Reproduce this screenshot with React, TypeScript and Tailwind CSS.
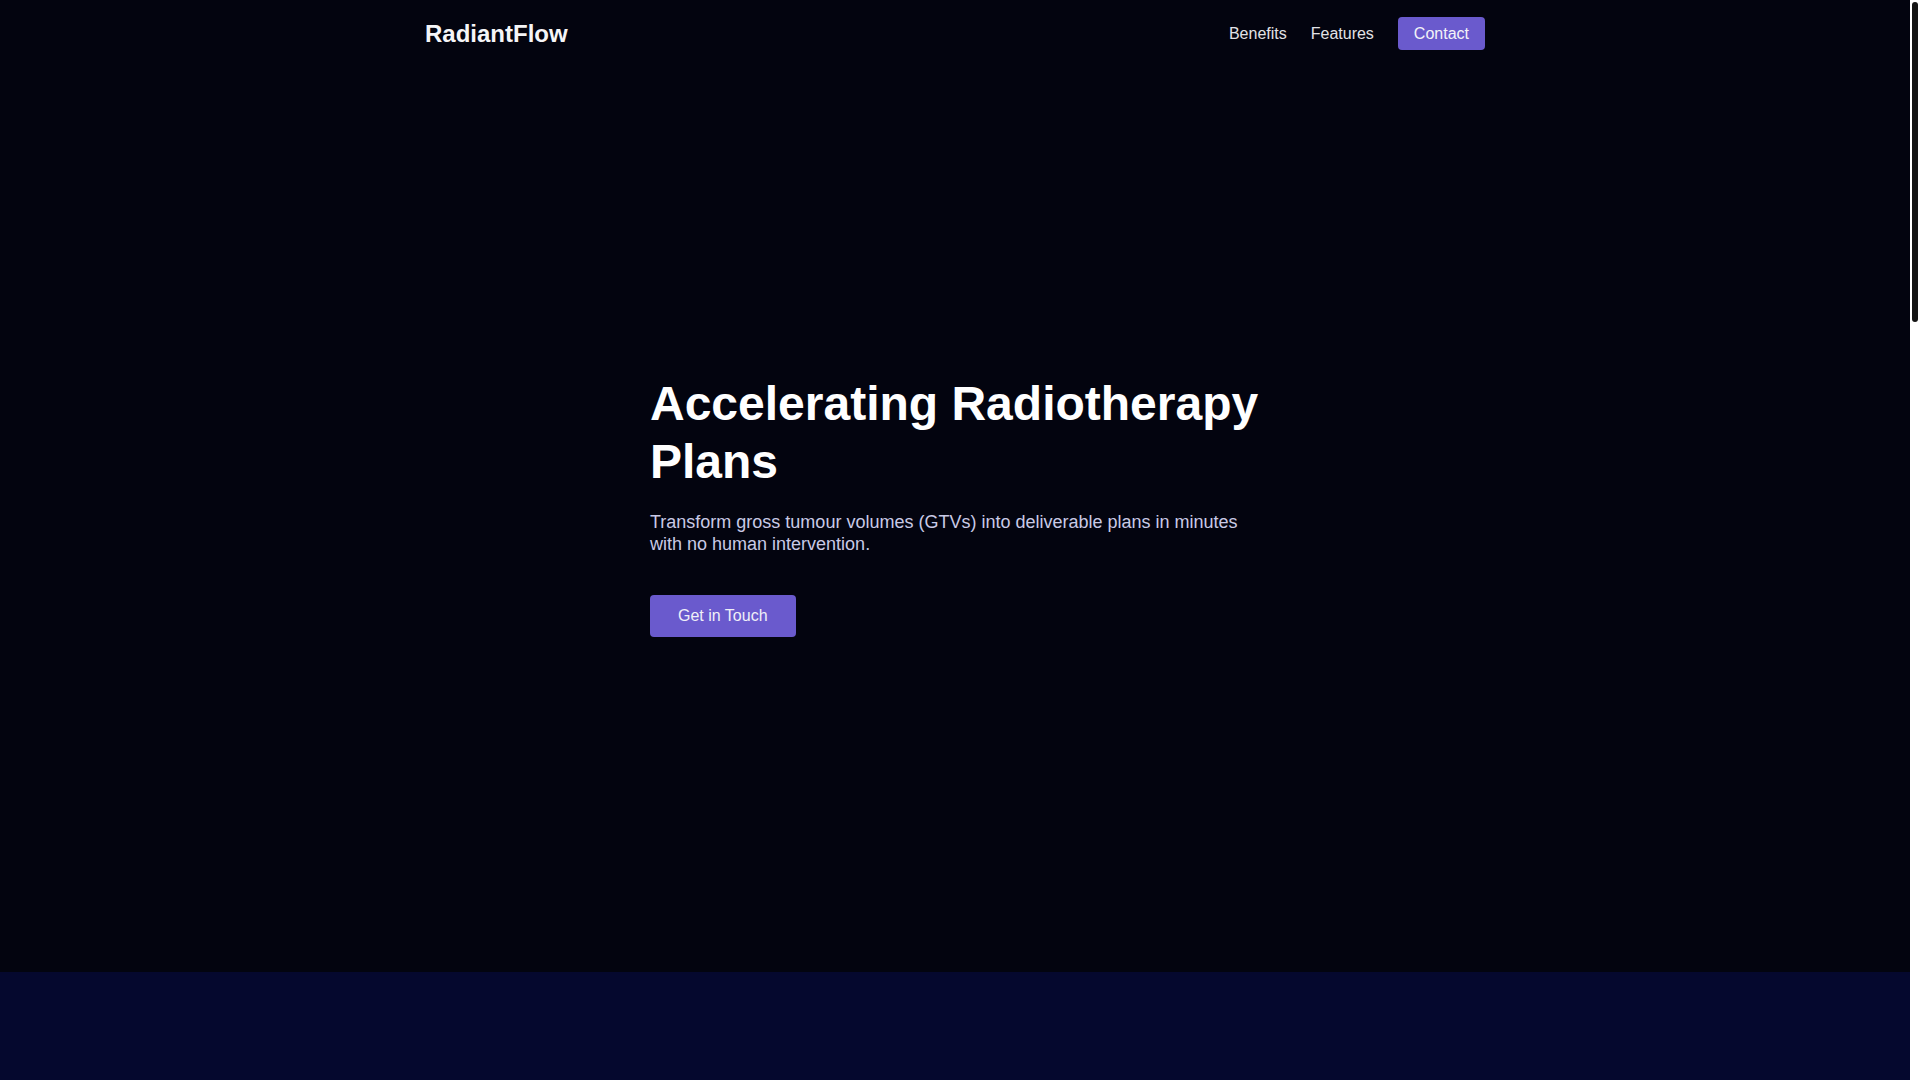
import React from "react";

export default function App() {
  return (
    <div
      className="flex h-screen w-full overflow-hidden bg-white text-white"
      style={{ fontFamily: '"Liberation Sans", Arial, sans-serif' }}
    >
      <main className="h-full min-w-0 flex-1 overflow-y-auto bg-[#04050f] [scrollbar-width:none] [&::-webkit-scrollbar]:hidden">
        <section className="h-[972px] bg-[#03040f]">
          <header className="mx-auto flex h-[67px] max-w-[1100px] items-center justify-between px-5">
            <div className="text-[24px] font-bold leading-[28px] text-[#f5f5f7]">RadiantFlow</div>
            <nav className="flex items-center gap-6 text-[16px] leading-[19px] text-[#e2e2e6]">
              <a href="#benefits">Benefits</a>
              <a href="#features">Features</a>
              <a href="#contact" className="rounded-[4px] bg-[#6a5acd] px-4 py-[7px] text-[#f3f3f8]">
                Contact
              </a>
            </nav>
          </header>
          <div className="mx-auto w-[610px] pt-[308px]">
            <h1 className="text-[48px] font-bold leading-[1.2] text-white">Accelerating Radiotherapy Plans</h1>
            <p className="mt-[21px] text-[18px] leading-[22px] text-[#c9cae6]">
              Transform gross tumour volumes (GTVs) into deliverable plans in minutes with no human intervention.
            </p>
            <button className="mt-[40px] rounded-[4px] bg-[#6a5acd] px-[28px] py-[12px] text-[16px] leading-[18px] text-[#f0f0f8]">
              Get in Touch
            </button>
          </div>
        </section>
        <section id="benefits" className="h-[1000px] bg-[#05082e]" />
        <section id="features" className="h-[1000px] bg-[#03040f]" />
        <section id="contact" className="h-[673px] bg-[#05082e]" />
      </main>
      <div aria-hidden="true" className="h-full w-[10px] shrink-0 bg-white pt-[2px]">
        <div className="mx-auto h-[320px] w-[6px] rounded-[3px] bg-[#141414]" />
      </div>
    </div>
  );
}
